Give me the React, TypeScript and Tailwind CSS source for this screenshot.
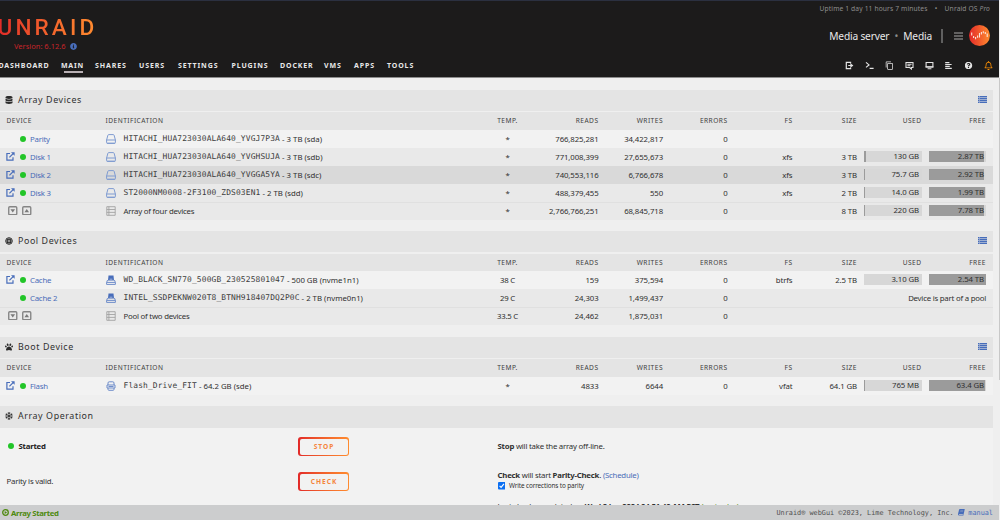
import type { ReactNode } from "react";
import { FaDatabase, FaPaw, FaBook, FaInfoCircle, FaQuestionCircle, FaRegSnowflake, FaRegBell } from "react-icons/fa";
import { MdContentCopy } from "react-icons/md";

type Kind = "disk" | "nvme" | "usb" | "pool";

interface Row {
  link?: boolean;
  name?: string;
  kind: Kind;
  mono?: string;
  label?: string;
  temp: string;
  reads: string;
  writes: string;
  fs?: string;
  size?: string;
  used?: string;
  usedPct?: number;
  free?: string;
  freePct?: number;
  note?: string;
  shade: string;
}

const cols =
  "grid grid-cols-[105.5px_369.5px_65px_58.5px_64.5px_64.5px_65px_64.5px_6.5px_58px_7px_57.5px_7.5px] items-center";

const arrayRows: Row[] = [
  { name: "Parity", kind: "disk", mono: "HITACHI_HUA723030ALA640_YVGJ7P3A", label: " - 3 TB (sda)", temp: "*", reads: "766,825,281", writes: "34,422,817", shade: "bg-[#f2f2f2]" },
  { link: true, name: "Disk 1", kind: "disk", mono: "HITACHI_HUA723030ALA640_YVGHSUJA", label: " - 3 TB (sdb)", temp: "*", reads: "771,008,399", writes: "27,655,673", fs: "xfs", size: "3 TB", used: "130 GB", usedPct: 4, free: "2.87 TB", freePct: 96, shade: "bg-[#e9e9e9]" },
  { link: true, name: "Disk 2", kind: "disk", mono: "HITACHI_HUA723030ALA640_YVGGA5YA", label: " - 3 TB (sdc)", temp: "*", reads: "740,553,116", writes: "6,766,678", fs: "xfs", size: "3 TB", used: "75.7 GB", usedPct: 3, free: "2.92 TB", freePct: 97, shade: "bg-[#d9d9d9]" },
  { link: true, name: "Disk 3", kind: "disk", mono: "ST2000NM0008-2F3100_ZDS03EN1", label: " - 2 TB (sdd)", temp: "*", reads: "488,379,455", writes: "550", fs: "xfs", size: "2 TB", used: "14.0 GB", usedPct: 1, free: "1.99 TB", freePct: 99, shade: "bg-[#e9e9e9]" },
  { kind: "pool", label: "Array of four devices", temp: "*", reads: "2,766,766,251", writes: "68,845,718", size: "8 TB", used: "220 GB", usedPct: 3, free: "7.78 TB", freePct: 97, shade: "bg-[#e9e9e9] shadow-[inset_0_1px_0_#e0e0e0]" },
];

const poolRows: Row[] = [
  { link: true, name: "Cache", kind: "nvme", mono: "WD_BLACK_SN770_500GB_230525801047", label: " - 500 GB (nvme1n1)", temp: "38 C", reads: "159", writes: "375,594", fs: "btrfs", size: "2.5 TB", used: "3.10 GB", usedPct: 0, free: "2.54 TB", freePct: 100, shade: "bg-[#f2f2f2]" },
  { name: "Cache 2", kind: "nvme", mono: "INTEL_SSDPEKNW020T8_BTNH918407DQ2P0C", label: " - 2 TB (nvme0n1)", temp: "29 C", reads: "24,303", writes: "1,499,437", note: "Device is part of a pool", shade: "bg-[#e9e9e9]" },
  { kind: "pool", label: "Pool of two devices", temp: "33.5 C", reads: "24,462", writes: "1,875,031", shade: "bg-[#e9e9e9] shadow-[inset_0_1px_0_#e0e0e0]" },
];

const bootRows: Row[] = [
  { link: true, name: "Flash", kind: "usb", mono: "Flash_Drive_FIT", label: " - 64.2 GB (sde)", temp: "*", reads: "4833", writes: "6644", fs: "vfat", size: "64.1 GB", used: "765 MB", usedPct: 1, free: "63.4 GB", freePct: 99, shade: "bg-[#f2f2f2]" },
];

const nav: [string, string][] = [
  ["DASHBOARD", "w-[62.5px] tracking-[0.8px]"],
  ["MAIN", "w-[34px] tracking-[0.75px]"],
  ["SHARES", "w-[44px]"],
  ["USERS", "w-[39px]"],
  ["SETTINGS", "w-[53.5px]"],
  ["PLUGINS", "w-[48.5px]"],
  ["DOCKER", "w-[44px]"],
  ["VMS", "w-[30px]"],
  ["APPS", "w-[33px]"],
  ["TOOLS", "w-[40px]"],
];

function ExternalIcon() {
  return (
    <svg className="size-[9px]" viewBox="0 0 9 9" fill="none" stroke="#486dba" strokeWidth="1.2">
      <path d="M4 1.5H.9V8.1H7V5.2" />
      <path d="M3.4 5.4L7.6 1.2" />
      <path d="M5 .2H8.6V3.8z" fill="#486dba" stroke="none" />
    </svg>
  );
}

function ListIcon() {
  return (
    <svg className="h-[7px] w-[9px]" viewBox="0 0 9 7" fill="#486dba">
      <path d="M0 0H1.3V1H0zM2 0H9V1H2zM0 2H1.3V3H0zM2 2H9V3H2zM0 4H1.3V5H0zM2 4H9V5H2zM0 6H1.3V7H0zM2 6H9V7H2z" />
      <path d="M0 0H9V7H0z" opacity=".45" />
    </svg>
  );
}

function KindIcon({ kind }: { kind: Kind }) {
  if (kind === "disk")
    return (
      <svg className="mt-px h-[10px] w-[10px]" viewBox="0 0 10 10" fill="none" stroke="#7f9bd1" strokeWidth="1">
        <path d="M.6 6L1.9 1.2Q2.1.6 2.8.6H7.2Q7.9.6 8.1 1.2L9.4 6V8.6Q9.4 9.4 8.6 9.4H1.4Q.6 9.4.6 8.6zM.6 6H9.4" />
        <path d="M1 9.2H9" />
      </svg>
    );
  if (kind === "nvme")
    return (
      <svg className="mt-px h-[10px] w-[10px]" viewBox="0 0 10 10">
        <path d="M2.5.6H7.5L8 5.6H2z" fill="#486dba" />
        <path d="M3.6 4.2H6.4" stroke="#c5d0e8" strokeWidth=".7" />
        <path d="M1.6 5L.6 7.4V9.4H9.4V7.4L8.4 5M.6 7.4H9.4" fill="none" stroke="#6f8dca" strokeWidth="1" />
      </svg>
    );
  if (kind === "usb")
    return (
      <svg className="mt-px h-[10px] w-[10px]" viewBox="0 0 10 10" fill="none" stroke="#6f8dca" strokeWidth="1">
        <path d="M2 4V2Q2 .8 3.2.8H6.8Q8 .8 8 2V4M1 4H9V7H1zM2 7V8.4Q2 9.3 3 9.3H7Q8 9.3 8 8.4V7M2.5 5.5H7.5" />
      </svg>
    );
  return (
    <svg className="h-[10px] w-[10px]" viewBox="0 0 10 10" fill="none" stroke="#a3a3a3" strokeWidth=".9">
      <path d="M.8.7H9.2V9.3H.8zM.8 3.5H9.2M.8 6.4H9.2M2.9.7V9.3" />
    </svg>
  );
}

function SpinButton({ up }: { up?: boolean }) {
  return (
    <svg className="size-[9.5px]" viewBox="0 0 9 9">
      <rect x=".7" y=".7" width="7.6" height="7.6" rx="1" fill="none" stroke="#858585" strokeWidth="1.3" />
      <path d={up ? "M2.3 5.9L4.5 2.8L6.7 5.9z" : "M2.3 3.1H6.7L4.5 6.2z"} fill="#7a7a7a" />
    </svg>
  );
}

function Meter({ text, pct, dark }: { text: string; pct: number; dark?: boolean }) {
  return (
    <div className="relative h-[11px] bg-[#d7d7d7] tracking-[-0.1px]">
      <div className="h-full bg-[#9b9b9b]" style={{ width: `${pct}%` }} />
      <span className={dark ? "absolute inset-y-0 right-[2px] leading-[10px]" : "absolute inset-y-0 right-[2.5px] leading-[10px]"}>
        {text}
      </span>
    </div>
  );
}

function TitleBar({ icon, title, list = true, size }: { icon: ReactNode; title: string; list?: boolean; size: string }) {
  return (
    <div className={`flex items-center bg-[#e4e4e4] pb-[2px] pl-[5px] pr-[6px] ${size}`}>
      <span className="flex w-[13px] items-center text-[8px] text-[#2b2b2b]">{icon}</span>
      <h2 className="flex-1 text-[8.9px] tracking-[0.58px] text-[#303030]">{title}</h2>
      {list && <ListIcon />}
    </div>
  );
}

function Head({ size }: { size: string }) {
  return (
    <div className={`${cols} bg-[#e4e4e4] text-[6.6px] tracking-[0.48px] text-[#404040] ${size}`}>
      <span className="pl-[6.5px]">DEVICE</span>
      <span>IDENTIFICATION</span>
      <span className="text-center">TEMP.</span>
      <span className="text-right">READS</span>
      <span className="text-right">WRITES</span>
      <span className="text-right">ERRORS</span>
      <span className="text-right">FS</span>
      <span className="text-right">SIZE</span>
      <span />
      <span className="text-right">USED</span>
      <span />
      <span className="text-right">FREE</span>
    </div>
  );
}

function DeviceRow({ row }: { row: Row }) {
  return (
    <div className={`${cols} h-[18px] pb-px ${row.shade}`}>
      {row.name ? (
        <div className="flex items-center pl-[6px]">
          <span className="w-[14px]">{row.link && <ExternalIcon />}</span>
          <span className="mt-px size-[5.5px] rounded-full bg-[#22c528]" />
          <span className="pl-[4.5px] text-[#4a6cb8]">{row.name}</span>
        </div>
      ) : (
        <div className="flex gap-[4.5px] pl-[8px]">
          <SpinButton />
          <SpinButton up />
        </div>
      )}
      <div className="flex items-center whitespace-pre">
        <span className="w-[18px]"><KindIcon kind={row.kind} /></span>
        <span className="font-['DejaVu_Sans_Mono',monospace] text-[7.9px] tracking-[0.14px] text-[#3c3c3c]">{row.mono}</span>
        <span className={row.mono ? "tracking-normal" : ""}>{row.label}</span>
      </div>
      <span className="text-center">{row.temp}</span>
      <span className="text-right tracking-[-0.1px]">{row.reads}</span>
      <span className="text-right tracking-[-0.1px]">{row.writes}</span>
      <span className="text-right">0</span>
      {row.note ? (
        <span className="col-span-6 text-right">{row.note}</span>
      ) : (
        <>
          <span className="text-right tracking-[-0.1px]">{row.fs}</span>
          <span className="text-right tracking-[-0.1px]">{row.size}</span>
          <span />
          {row.used ? <Meter text={row.used} pct={row.usedPct ?? 0} /> : <span />}
          <span />
          {row.free ? <Meter text={row.free} pct={row.freePct ?? 0} dark /> : <span />}
        </>
      )}
    </div>
  );
}

function ActionButton({ children }: { children: string }) {
  return (
    <button className="h-[19px] w-[51px] rounded-[3px] bg-linear-to-r from-[#e22828] to-[#ff8c2f] p-[1.5px]">
      <span className="flex h-full items-center justify-center rounded-[2px] bg-[#f2f2f2] pl-px text-[6.6px] font-bold tracking-[1px] text-[#f5853d]">
        {children}
      </span>
    </button>
  );
}

function PoolIcon() {
  return (
    <svg className="size-[8px]" viewBox="0 0 8 8" fill="none" stroke="#2b2b2b">
      <circle cx="4" cy="4" r="3.3" strokeWidth="1" />
      <circle cx="4" cy="4" r="1.9" strokeWidth="1.2" />
      <circle cx="4" cy="4" r=".8" fill="#2b2b2b" stroke="none" />
    </svg>
  );
}

function HeaderTools() {
  return (
    <div className="flex gap-[10.8px] text-[9px] text-[#e4e4e4]">
      <svg className="size-[9px]" viewBox="0 0 9 9" fill="none" stroke="currentColor" strokeWidth="1.2">
        <path d="M5.6 2.4V1.3H1.3V7.7H5.6V6.6M3.2 4.5H6.4" />
        <path d="M5.4 2.2L8.4 4.5L5.4 6.8z" fill="currentColor" stroke="none" />
      </svg>
      <svg className="size-[9px]" viewBox="0 0 9 9" fill="none" stroke="currentColor" strokeWidth="1.2">
        <path d="M1 1.4L4 3.9L1 6.4M4.6 7.4H8.6" />
      </svg>
      <MdContentCopy />
      <svg className="size-[9px]" viewBox="0 0 9 9" fill="none" stroke="currentColor" strokeWidth="1.1">
        <path d="M1 1.5H8V6.5H6.4V8L4.6 6.5H1zM2.4 3.2H6.6M2.4 4.8H5.4" />
      </svg>
      <svg className="size-[9px]" viewBox="0 0 9 9" fill="none" stroke="currentColor" strokeWidth="1.1">
        <path d="M1.1 1.5H7.9V6H1.1z" />
        <path d="M.6 5.3H8.4V6.5H.6zM2.6 7.2H6.4V8.2H2.6z" fill="currentColor" stroke="none" />
      </svg>
      <svg className="size-[9px]" viewBox="0 0 9 9" fill="none" stroke="currentColor" strokeWidth="1.2">
        <path d="M1.2 1.6H5.4M1.2 3.5H7.6M1.2 5.4H5.8M1.2 7.3H7.8" />
      </svg>
      <FaQuestionCircle className="p-[0.7px]" />
      <FaRegBell className="text-[#f18a05]" />
    </div>
  );
}

export default function App() {
  return (
    <div className="flex h-[520px] w-[1000px] flex-col overflow-hidden bg-[#efefef] font-['Noto_Sans',sans-serif] text-[7.8px] leading-[10px] tracking-[-0.22px] text-[#303030]">
      <header className="flex h-[78px] w-[999px] shrink-0 justify-between border-t border-b border-t-[#2b3040] border-b-[#8d8d8d] bg-[#1c1b1b]">
        <div className="flex flex-col">
          <div className="-ml-[2.5px] mt-[14px] w-fit bg-linear-to-r from-[#e22828] to-[#ff8c2f] bg-clip-text font-['Roboto',sans-serif] text-[22.6px] font-medium leading-[26px] tracking-[3.1px] text-transparent">
            UNRAID
          </div>
          <div className="flex items-center gap-[4px] pl-[14px] text-[7.5px] tracking-[0px] text-[#c8252a]">
            <span>Version: 6.12.6</span>
            <FaInfoCircle className="text-[7px] text-[#486dba]" />
          </div>
          <nav className="-ml-[1.5px] mt-[10px] flex text-[7px] font-bold tracking-[0.88px] text-[#e8e8e8]">
            {nav.map(([name, width]) => (
              <div key={name} className={`shrink-0 ${width}`}>
                {name}
                {name === "MAIN" && <div className="ml-[3px] h-[2px] w-[18.5px] bg-[#b8b0b4]" />}
              </div>
            ))}
          </nav>
        </div>
        <div className="flex flex-col items-end pt-[3px]">
          <div className="flex whitespace-pre pr-[9px] text-[6.7px] tracking-[0.13px] text-[#8d8d8d]">
            <span>Uptime 1 day 11 hours 7 minutes</span>
            <span className="w-[17px] text-center">•</span>
            <span>Unraid OS <i>Pro</i></span>
          </div>
          <div className="mt-[10.5px] flex h-[22px] items-center pr-[9.5px] text-[10.2px] tracking-[-0.18px] text-[#e8e8e8]">
            <span>Media server</span>
            <span className="w-[14px] text-center text-[#8d8d8d]">•</span>
            <span>Media</span>
            <span className="ml-[9px] h-[14px] w-[1.5px] bg-[#606060]" />
            <svg className="ml-[11px] h-[8px] w-[9px]" viewBox="0 0 9 8" stroke="#a8a8a8" strokeWidth="1.2">
              <path d="M0 1H9M0 4H9M0 7H9" />
            </svg>
            <svg className="ml-[6px] size-[21px]" viewBox="0 0 21 21">
              <defs>
                <linearGradient id="badge">
                  <stop offset="0" stopColor="#e32929" />
                  <stop offset="1" stopColor="#ff8c2f" />
                </linearGradient>
              </defs>
              <circle cx="10.5" cy="10.5" r="10.5" fill="url(#badge)" />
              <path d="M2.7 7.5V10.5M4.6 11V13M6.6 12V14.3M8.6 10.5V12.8M10.5 8V12.4M12.4 7V9.5M14.3 6.2V8.3M16.3 7V9M18.2 8.6V12" stroke="#fbe4d8" strokeWidth="1.1" />
            </svg>
          </div>
          <div className="mt-[14.5px] pr-[6px]"><HeaderTools /></div>
        </div>
      </header>

      <div className="flex h-[427px] shrink-0 justify-between">
        <main className="flex w-[993px] flex-col pt-[12px]">
          <section>
            <TitleBar icon={<FaDatabase />} title="Array Devices" size="h-[21px]" />
            <Head size="mt-px h-[18px]" />
            {arrayRows.map((row, i) => <DeviceRow key={i} row={row} />)}
          </section>
          <section className="mt-[11px]">
            <TitleBar icon={<PoolIcon />} title="Pool Devices" size="h-[21px]" />
            <Head size="mt-[2px] h-[17px]" />
            {poolRows.map((row, i) => <DeviceRow key={i} row={row} />)}
          </section>
          <section className="mt-[12px]">
            <TitleBar icon={<FaPaw />} title="Boot Device" size="h-[21px]" />
            <Head size="mt-px h-[18px]" />
            {bootRows.map((row, i) => <DeviceRow key={i} row={row} />)}
          </section>
          <section className="mt-[11px] flex flex-1 flex-col overflow-hidden">
            <TitleBar icon={<FaRegSnowflake />} title="Array Operation" list={false} size="h-[22px] shrink-0" />
            <div className="grid flex-1 grid-cols-[298px_199.5px_1fr] grid-rows-[37px_33px_16px] items-center bg-[#f2f2f2]">
              <div className="flex items-center pb-px pl-[8px]">
                <span className="size-[6px] rounded-full bg-[#22c528]" />
                <b className="pl-[4.5px] text-[#1c1b1b]">Started</b>
              </div>
              <ActionButton>STOP</ActionButton>
              <div className="pb-px">
                <b>Stop</b> will take the array off-line.
              </div>
              <div className="pb-px pl-[6.5px]">Parity is valid.</div>
              <ActionButton>CHECK</ActionButton>
              <div className="pb-[2px]">
                <div className="pb-px"><b>Check</b> will start <b>Parity-Check</b>. <span className="text-[#4a6cb8]">(Schedule)</span></div>
                <div className="flex items-center text-[6.4px] tracking-[-0.12px]">
                  <svg className="mr-[4px] size-[7.5px]" viewBox="0 0 8 8">
                    <rect width="8" height="8" rx="1" fill="#0b6ff2" />
                    <path d="M1.7 4.1L3.3 5.8L6.3 2.1" fill="none" stroke="#fff" strokeWidth="1.2" />
                  </svg>
                  Write corrections to parity
                </div>
              </div>
              <div className="col-start-3 whitespace-nowrap">
                Last check completed on <b>Wed 3 Jan 2024 04:51:40 AM PST</b> <span className="text-[#4f8a10]">(yesterday)</span>
              </div>
            </div>
          </section>
        </main>
        <div className="h-[302px] w-[1.5px] bg-[#c8c8c8]" />
      </div>

      <footer className="flex h-[15px] w-[999px] shrink-0 items-center justify-between bg-[#cccdce] pl-[2px] pr-[6px]">
        <div className="flex items-center gap-[2px] font-bold tracking-[-0.35px] text-[#4f8a10]">
          <svg className="size-[7px]" viewBox="0 0 7 7">
            <circle cx="3.5" cy="3.5" r="2.8" fill="none" stroke="#4f8a10" strokeWidth="1.3" />
            <path d="M2.7 2L5 3.5L2.7 5z" fill="#4f8a10" />
          </svg>
          Array Started
        </div>
        <div className="flex items-center whitespace-pre font-['DejaVu_Sans_Mono',monospace] text-[6.85px] tracking-normal text-[#505050]">
          <span>Unraid® webGui ©2023, Lime Technology, Inc. </span>
          <FaBook className="mr-[4px] -skew-x-12 text-[6.5px] text-[#486dba]" />
          <span className="text-[#486dba]">manual</span>
        </div>
      </footer>
    </div>
  );
}
